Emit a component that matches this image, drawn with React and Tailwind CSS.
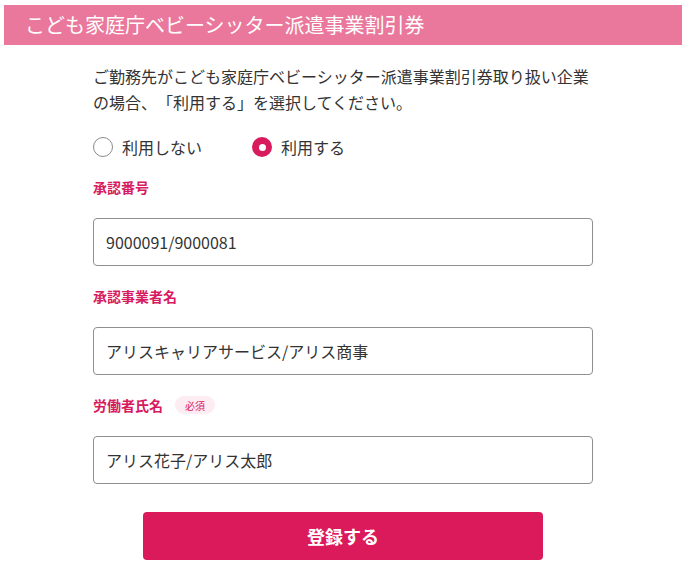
import { useState } from 'react';

const fields = [
  { label: '承認番号', value: '9000091/9000081' },
  { label: '承認事業者名', value: 'アリスキャリアサービス/アリス商事' },
  { label: '労働者氏名', value: 'アリス花子/アリス太郎', required: true },
];

function Radio({ checked, label, onClick }) {
  return (
    <button type="button" onClick={onClick} className="flex items-center gap-[9px]">
      {checked ? (
        <span className="w-[20px] h-[20px] rounded-full bg-[#d81b5c] flex items-center justify-center">
          <span className="w-[7px] h-[7px] rounded-full bg-white" />
        </span>
      ) : (
        <span className="w-[20px] h-[20px] rounded-full border border-[#8c8c8c] bg-white" />
      )}
      <span className="text-[16px] text-[#333]">{label}</span>
    </button>
  );
}

export default function App() {
  const [use, setUse] = useState(true);

  return (
    <div className="min-h-screen bg-white pt-[5px] px-[4px] font-['Noto_Sans_CJK_JP',sans-serif] [text-spacing-trim:space-all]">
      <div className="h-[40px] bg-[#ea789c] flex items-center pl-[21px]">
        <h1 className="text-white text-[20px] leading-none">こども家庭庁ベビーシッター派遣事業割引券</h1>
      </div>

      <div className="w-[500px] mx-auto">
        <p className="mt-[18px] text-[16px] leading-[26px] text-[#333]">
          ご勤務先がこども家庭庁ベビーシッター派遣事業割引券取り扱い企業の場合、「利用する」を選択してください。
        </p>

        <div className="mt-[20px] flex items-center gap-[41px] h-[24px]">
          <div className="w-[118px]">
            <Radio checked={!use} label="利用しない" onClick={() => setUse(false)} />
          </div>
          <Radio checked={use} label="利用する" onClick={() => setUse(true)} />
        </div>

        {fields.map((f, i) => (
          <div key={i} className={i === 0 ? 'mt-[18px]' : 'mt-[20px]'}>
            <div className="flex items-center h-[20px]">
              <span className="text-[14px] font-bold text-[#d81b60]">{f.label}</span>
              {f.required && (
                <span className="ml-[12px] h-[18px] px-[10px] rounded-full bg-[#fdecf1] text-[#d81b60] text-[10px] flex items-center">
                  必須
                </span>
              )}
            </div>
            <input
              className="mt-[21px] w-full h-[48px] border border-[#8f8f8f] rounded-[4px] px-[12px] text-[16px] text-[#333] outline-none"
              defaultValue={f.value}
            />
          </div>
        ))}

        <div className="mt-[28px] flex justify-center">
          <button
            type="button"
            className="w-[400px] h-[48px] rounded-[4px] bg-[#db1a5b] text-white text-[18px] font-bold"
          >
            登録する
          </button>
        </div>
      </div>
    </div>
  );
}
